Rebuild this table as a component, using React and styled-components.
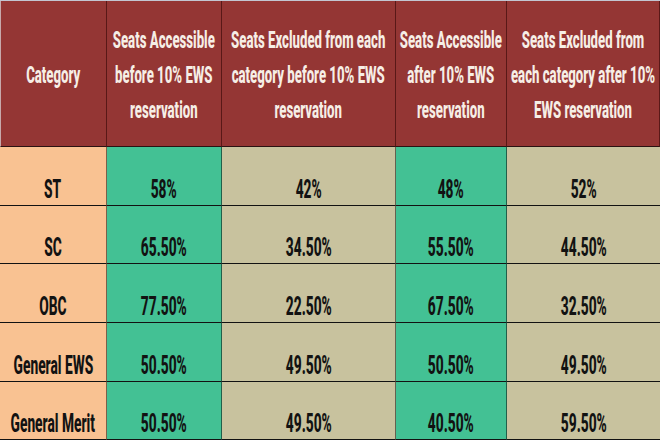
import React from "react";
import styled, { createGlobalStyle } from "styled-components";

const Global = createGlobalStyle`
  html, body { margin: 0; padding: 0; background: #ffffff; }
  #root { width: 660px; height: 440px; }
`;

const Table = styled.div`
  display: grid;
  grid-template-columns: 107px 115px 174px 111px 153px;
  grid-template-rows: 146px repeat(5, auto);
  width: 660px;
  height: 440px;
  box-sizing: border-box;
  border-top: 1px solid #c3c6d2;
  overflow: hidden;
`;

const HeadCell = styled.div`
  box-sizing: border-box;
  background: #943634;
  border-right: 1px solid rgba(40, 0, 0, 0.55);
  border-bottom: 1px solid #2a1212;
  border-left: ${(p) => (p.$first ? "1px solid #c7a9ab" : "none")};
  display: flex;
  align-items: center;
  justify-content: center;
  padding-top: 4px;
  color: #f6eee6;
  &:last-child { border-right: none; }
`;

const Cell = styled.div`
  box-sizing: border-box;
  height: ${(p) => p.$h}px;
  background: ${(p) =>
    p.$tone === "cat" ? "#f9c292" : p.$tone === "green" ? "#43c194" : "#c8c29e"};
  border-right: ${(p) => (p.$last ? "none" : "1px solid rgba(0, 0, 0, 0.5)")};
  border-bottom: 1px solid #121212;
  display: flex;
  align-items: flex-end;
  justify-content: center;
  padding-bottom: 3px;
  color: #121212;
`;

const Label = styled.span`
  display: inline-block;
  white-space: nowrap;
  text-align: center;
  font-family: Roboto, "Liberation Sans", sans-serif;
  font-weight: ${(p) => p.$weight};
  font-size: ${(p) => p.$size}px;
  line-height: ${(p) => p.$lh};
  transform: scaleX(${(p) => p.$sx});
  transform-origin: center;
`;

const headers = [
  ["Category"],
  ["Seats Accessible", "before 10% EWS", "reservation"],
  ["Seats Excluded from each", "category before 10% EWS", "reservation"],
  ["Seats Accessible", "after 10% EWS", "reservation"],
  ["Seats Excluded from", "each category after 10%", "EWS reservation"],
];

const rows = [
  { h: 59, cells: ["ST", "58%", "42%", "48%", "52%"] },
  { h: 58, cells: ["SC", "65.50%", "34.50%", "55.50%", "44.50%"] },
  { h: 59, cells: ["OBC", "77.50%", "22.50%", "67.50%", "32.50%"] },
  { h: 59, cells: ["General EWS", "50.50%", "49.50%", "50.50%", "49.50%"] },
  { h: 58, cells: ["General Merit", "50.50%", "49.50%", "40.50%", "59.50%"] },
];

const tones = ["cat", "green", "tan", "green", "tan"];

export default function App() {
  return (
    <>
      <Global />
      <Table>
        {headers.map((lines, i) => (
          <HeadCell key={"h" + i} $first={i === 0}>
            <Label $size={24} $lh="35px" $weight={800} $sx={0.55}>
              {lines.map((l, j) => (
                <React.Fragment key={j}>
                  {j > 0 && <br />}
                  {l}
                </React.Fragment>
              ))}
            </Label>
          </HeadCell>
        ))}
        {rows.map((r, ri) =>
          r.cells.map((c, ci) => (
            <Cell key={ri + "-" + ci} $h={r.h} $tone={tones[ci]} $last={ci === 4}>
              <Label $size={25} $lh={1} $weight={800} $sx={0.55}>
                {c}
              </Label>
            </Cell>
          ))
        )}
      </Table>
    </>
  );
}
